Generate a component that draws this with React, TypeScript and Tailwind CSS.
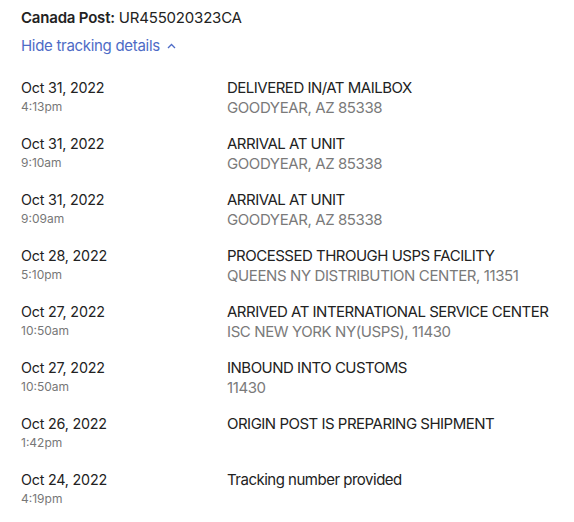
const events = [
  { date: "Oct 31, 2022", time: "4:13pm", status: "DELIVERED IN/AT MAILBOX", place: "GOODYEAR, AZ 85338" },
  { date: "Oct 31, 2022", time: "9:10am", status: "ARRIVAL AT UNIT", place: "GOODYEAR, AZ 85338" },
  { date: "Oct 31, 2022", time: "9:09am", status: "ARRIVAL AT UNIT", place: "GOODYEAR, AZ 85338" },
  { date: "Oct 28, 2022", time: "5:10pm", status: "PROCESSED THROUGH USPS FACILITY", place: "QUEENS NY DISTRIBUTION CENTER, 11351" },
  { date: "Oct 27, 2022", time: "10:50am", status: "ARRIVED AT INTERNATIONAL SERVICE CENTER", place: "ISC NEW YORK NY(USPS), 11430" },
  { date: "Oct 27, 2022", time: "10:50am", status: "INBOUND INTO CUSTOMS", place: "11430" },
  { date: "Oct 26, 2022", time: "1:42pm", status: "ORIGIN POST IS PREPARING SHIPMENT", place: "" },
  { date: "Oct 24, 2022", time: "4:19pm", status: "Tracking number provided", place: "" },
];

export default function App() {
  return (
    <div className="min-h-[522px] w-[574px] bg-white px-[21px] pt-[8px] font-['Inter',sans-serif] text-[#222222]">
      <p className="text-[15px] leading-5 tracking-[-0.2px]">
        <span className="font-semibold">Canada Post:</span> UR455020323CA
      </p>
      <button
        type="button"
        className="mt-[8px] flex items-center gap-[7px] text-[15px] leading-5 tracking-[-0.3px] text-[#4d6bc6]"
      >
        Hide tracking details
        <svg width="9" height="6" viewBox="0 0 9 6" fill="none" stroke="currentColor" strokeWidth="1.3">
          <path d="M1 5l3.5-3.5L8 5" />
        </svg>
      </button>

      <ul className="mt-[22px]">
        {events.map((e, i) => (
          <li key={i} className="grid h-[56px] grid-cols-[206px_1fr]">
            <div>
              <p className="text-[14.3px] leading-5 tracking-[-0.2px]">{e.date}</p>
              <p className="mt-[1px] text-[12px] leading-4 text-[#777777]">{e.time}</p>
            </div>
            <div className="whitespace-nowrap">
              <p className="text-[15px] leading-5 tracking-[-0.5px]">{e.status}</p>
              {e.place && <p className="text-[15px] leading-5 tracking-[-0.4px] text-[#7a7a7a]">{e.place}</p>}
            </div>
          </li>
        ))}
      </ul>
    </div>
  );
}
